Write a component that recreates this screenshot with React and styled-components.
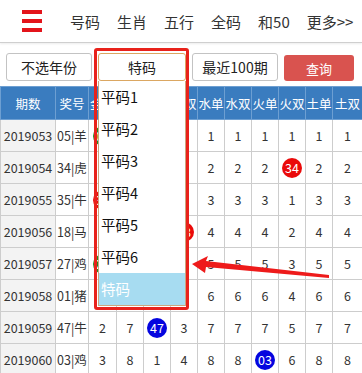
import React from 'react'
import styled, { createGlobalStyle } from 'styled-components'

const GlobalStyle = createGlobalStyle`
  body {
    margin: 0;
    background: #fff;
    font-family: "Noto Sans CJK SC", "Noto Sans", sans-serif;
    color: #333;
  }
`

const Page = styled.div`
  position: relative;
  width: 362px;
  height: 373px;
  overflow: hidden;
`

const NavBar = styled.div`
  display: flex;
  align-items: center;
  height: 42px;
  padding-left: 22px;
  border-bottom: 1px solid #cfcfcf;
  box-shadow: 0 1px 2px rgba(0, 0, 0, 0.08);
`

const Burger = styled.div`
  display: flex;
  flex-direction: column;
  flex-shrink: 0;
  gap: 5px;
  width: 20px;
  margin-right: 28px;
  span {
    display: block;
    height: 4px;
    background: #e3141b;
  }
`

const NavItem = styled.span`
  flex-shrink: 0;
  font-size: 15px;
  color: #333;
  margin-right: 17px;
  white-space: nowrap;
`

const Filters = styled.div`
  display: flex;
  gap: 6px;
  padding: 10px 0 5px 6px;
  align-items: center;
`

const Btn = styled.div`
  box-sizing: border-box;
  width: ${p => p.$w}px;
  height: 28px;
  border: 1px solid ${p => p.$border || '#c3c3c3'};
  border-radius: 3px;
  background: #fff;
  display: flex;
  align-items: center;
  justify-content: center;
  font-size: 14px;
  color: #222;
`

const SelectWrap = styled.div`
  position: relative;
  z-index: 5;
`

const Dropdown = styled.div`
  position: absolute;
  top: 100%;
  left: 0;
  box-sizing: border-box;
  width: 88px;
  background: #fff;
  border: 1px solid #caa77e;
  border-top: none;
`

const Option = styled.div`
  height: 32px;
  line-height: 32px;
  padding-left: 2px;
  font-size: 14.5px;
  color: ${p => (p.$active ? '#fff' : '#111')};
  background: ${p => (p.$active ? '#a7dcf1' : '#fff')};
`

const Highlight = styled.div`
  position: absolute;
  left: -4px;
  top: -5px;
  width: 95px;
  height: 262px;
  box-sizing: border-box;
  border: 3px solid #e8221b;
  border-radius: 3px;
  pointer-events: none;
  z-index: 6;
`

const QueryBtn = styled.div`
  width: 70px;
  height: 26px;
  margin-top: 2px;
  border-radius: 3px;
  background: #d9534f;
  color: #fff;
  font-size: 13px;
  display: flex;
  align-items: center;
  justify-content: center;
`

const Table = styled.table`
  width: 362px;
  border-collapse: collapse;
  table-layout: fixed;
  font-size: 12.5px;
`

const Th = styled.th`
  height: 32px;
  padding: 0;
  background: #3a7cbf;
  color: #fff;
  font-weight: normal;
  border: 1px solid #6d9fd2;
  white-space: nowrap;
  overflow: hidden;
`

const Td = styled.td`
  height: 31px;
  padding: 0;
  text-align: center;
  border: 1px solid #cdcdcd;
  color: #333;
  white-space: nowrap;
  background: ${p => (p.$gray ? '#f3f3f3' : '#fff')};
`

const Ball = styled.span`
  display: inline-flex;
  align-items: center;
  justify-content: center;
  width: 20px;
  height: 20px;
  border-radius: 50%;
  color: #fff;
  font-size: 12.5px;
  background: ${p => p.$c};
`

const Arrow = styled.svg`
  position: absolute;
  left: 0;
  top: 0;
  pointer-events: none;
  z-index: 7;
`

const colors = { r: '#ea0a0a', g: '#1f8b24', b: '#0505df' }
const b = (n, c) => ({ n, c })

const rows = [
  ['2019053', '05|羊', [b('05', 'g'), 1, 1, 1, 1, 1, 1, 1, 1, 1]],
  ['2019054', '34|虎', [1, 2, 2, 2, 2, 2, 2, b('34', 'r'), 2, 2]],
  ['2019055', '35|牛', [b('35', 'r'), 3, 3, 3, 3, 3, 3, 1, 3, 3]],
  ['2019056', '18|马', [1, 4, 4, b('18', 'r'), 4, 4, 4, 2, 4, 4]],
  ['2019057', '27|鸡', [b('27', 'g'), 5, 5, 1, 5, 5, 5, 3, 5, 5]],
  ['2019058', '01|猪', [1, 6, b('01', 'r'), 2, 6, 6, 6, 4, 6, 6]],
  ['2019059', '47|牛', [2, 7, b('47', 'b'), 3, 7, 7, 7, 5, 7, 7]],
  ['2019060', '03|鸡', [3, 8, 1, 4, 8, 8, b('03', 'b'), 6, 8, 8]],
]

const heads = ['金单', '金双', '木单', '木双', '水单', '水双', '火单', '火双', '土单', '土双']
const widths = [28, 27, 27, 27, 27, 27, 27, 27, 27, 30]
const options = ['平码1', '平码2', '平码3', '平码4', '平码5', '平码6', '特码']

export default function App() {
  return (
    <Page>
      <GlobalStyle />
      <NavBar>
        <Burger><span /><span /><span /></Burger>
        {['号码', '生肖', '五行', '全码', '和50', '更多>>'].map(t => (
          <NavItem key={t}>{t}</NavItem>
        ))}
      </NavBar>
      <Filters>
        <Btn $w={86}>不选年份</Btn>
        <SelectWrap>
          <Btn $w={88} $border="#dba762">特码</Btn>
          <Dropdown>
            {options.map(o => (
              <Option key={o} $active={o === '特码'}>{o}</Option>
            ))}
          </Dropdown>
          <Highlight />
        </SelectWrap>
        <Btn $w={86}>最近100期</Btn>
        <QueryBtn>查询</QueryBtn>
      </Filters>
      <Table>
        <colgroup>
          <col style={{ width: 55 }} />
          <col style={{ width: 33 }} />
          {widths.map((w, i) => <col key={i} style={{ width: w }} />)}
        </colgroup>
        <thead>
          <tr>
            <Th>期数</Th>
            <Th>奖号</Th>
            {heads.map(h => <Th key={h}>{h}</Th>)}
          </tr>
        </thead>
        <tbody>
          {rows.map(([q, n, cells]) => (
            <tr key={q}>
              <Td $gray>{q}</Td>
              <Td>{n}</Td>
              {cells.map((c, i) => (
                <Td key={i}>
                  {typeof c === 'object' ? <Ball $c={colors[c.c]}>{c.n}</Ball> : c}
                </Td>
              ))}
            </tr>
          ))}
        </tbody>
      </Table>
      <Arrow width="362" height="373">
        <polygon
          points="192,264 208,256 206,261 329,275 329,278 206,267 205,273"
          fill="#ee1b1b"
        />
      </Arrow>
    </Page>
  )
}
